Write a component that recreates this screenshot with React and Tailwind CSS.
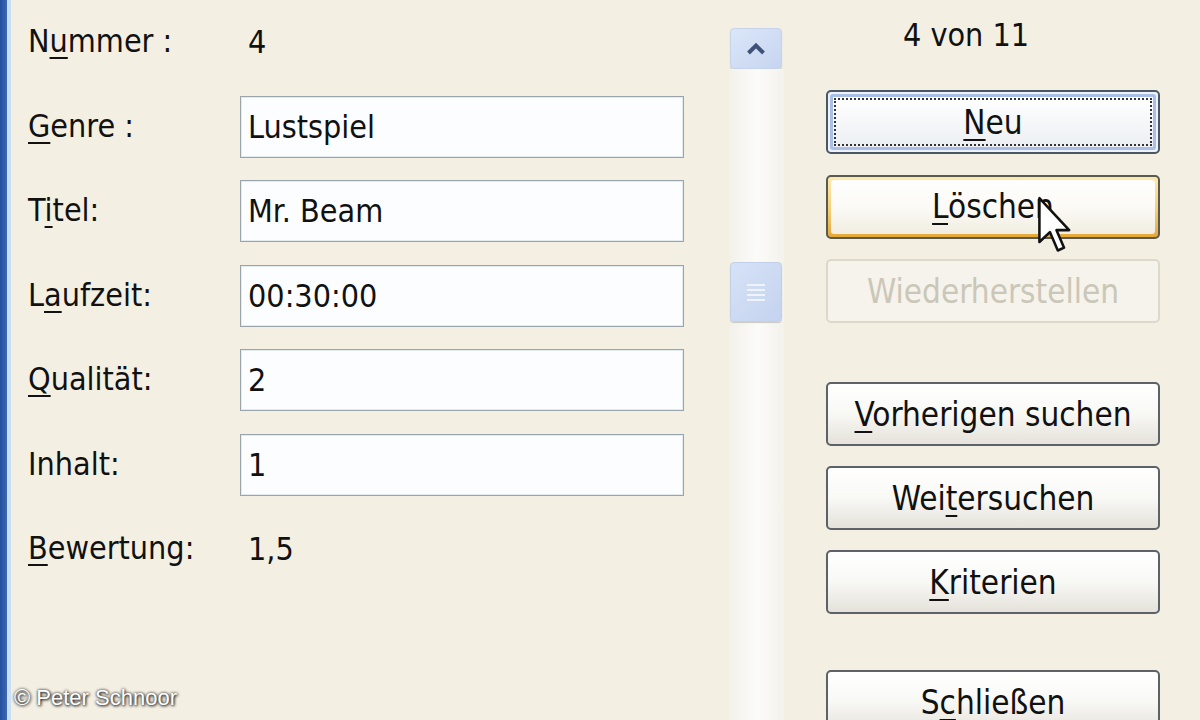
import React from "react";

const font = { fontFamily: '"DejaVu Sans Condensed", "DejaVu Sans", sans-serif' };

// label with an optional underlined access key
function Label({ before, keyChar, after }) {
  return (
    <span className="text-[32px] text-[#111] leading-none">
      {before}
      {keyChar && <u className="underline decoration-2 underline-offset-[5px]">{keyChar}</u>}
      {after}
    </span>
  );
}

function Key({ children }) {
  return <u className="underline decoration-2 underline-offset-[5px]">{children}</u>;
}

function FieldRow({ label, value, input }) {
  return (
    <div className="h-[84.5px] flex items-center">
      <div className="w-[212px] shrink-0">{label}</div>
      {input ? (
        <div className="w-[444px] h-[62px] border border-[#9aa4ad] bg-[#fbfdfe] flex items-center pl-[7px] shadow-[inset_0_0_0_1px_#e4ebf0]">
          <span className="text-[32px] text-[#111] leading-none">{value}</span>
        </div>
      ) : (
        <span className="text-[32px] text-[#111] leading-none pl-[8px]">{value}</span>
      )}
    </div>
  );
}

function XpButton({ children, variant = "normal" }) {
  if (variant === "default") {
    return (
      <div className="h-[64px] shrink-0 rounded-[5px] border-2 border-[#4a5866] bg-[#eef3fb] p-[2px]">
        <div className="h-full rounded-[3px] border-[3px] border-[#a9bfe8] bg-gradient-to-b from-[#ffffff] to-[#eceff3] p-[1px]">
          <div className="h-full border-2 border-dotted border-[#333] flex items-center justify-center text-[33px] text-[#111] leading-none">
            {children}
          </div>
        </div>
      </div>
    );
  }
  if (variant === "hover") {
    return (
      <div className="h-[64px] shrink-0 rounded-[5px] border-2 border-[#5b5a4e] bg-gradient-to-b from-[#fde9b0] via-[#f6d27e] to-[#e5a836] p-[3px]">
        <div className="h-full rounded-[3px] bg-gradient-to-b from-[#fefefd] via-[#fbfaf6] to-[#f1ede1] flex items-center justify-center text-[33px] text-[#111] leading-none">
          {children}
        </div>
      </div>
    );
  }
  if (variant === "disabled") {
    return (
      <div className="h-[64px] shrink-0 rounded-[5px] border-2 border-[#dcd8cb] bg-[#f5f3ec] flex items-center justify-center text-[33px] text-[#cbc7b8] leading-none">
        {children}
      </div>
    );
  }
  return (
    <div className="h-[64px] shrink-0 rounded-[5px] border-2 border-[#5d6168] bg-gradient-to-b from-[#ffffff] via-[#f8f8f5] to-[#e4e2da] flex items-center justify-center text-[33px] text-[#111] leading-none">
      {children}
    </div>
  );
}

function Arrow() {
  return (
    <svg width="34" height="60" viewBox="0 0 12 20" className="absolute left-[1038px] top-[195px]">
      <path
        d="M0.5 0.5 L0.5 16 L4.2 12.5 L7 19 L9.2 18 L6.5 11.8 L11 11.8 Z"
        fill="#fff"
        stroke="#111"
        strokeWidth="0.9"
        strokeLinejoin="round"
      />
    </svg>
  );
}

export default function App() {
  return (
    <div className="relative w-[1200px] h-[720px] overflow-hidden bg-[#f4efe3] flex" style={font}>
      <div className="w-[7px] bg-gradient-to-r from-[#234f9c] to-[#3d69b3] shrink-0" />
      <div className="w-[4px] bg-[#cadff3] shrink-0" />

      {/* record fields */}
      <div className="w-[714px] shrink-0 pl-[17px]">
        <FieldRow label={<Label before="N" keyChar="u" after="mmer :" />} value="4" />
        <FieldRow label={<Label keyChar="G" after="enre :" />} value="Lustspiel" input />
        <FieldRow label={<Label before="T" keyChar="i" after="tel:" />} value="Mr. Beam" input />
        <FieldRow label={<Label before="L" keyChar="a" after="ufzeit:" />} value="00:30:00" input />
        <FieldRow label={<Label keyChar="Q" after="ualität:" />} value="2" input />
        <FieldRow label={<Label before="Inhalt:" />} value="1" input />
        <FieldRow label={<Label keyChar="B" after="ewertung:" />} value="1,5" />
      </div>

      {/* scrollbar */}
      <div className="w-[60px] shrink-0 flex flex-col pt-[28px] pl-[5px]">
        <div className="w-[52px] h-[41px] shrink-0 rounded-[4px] border border-[#c6d3ea] bg-gradient-to-br from-[#dbe6f8] to-[#c6d5f0] flex items-center justify-center shadow-[0_1px_1px_#c9c9c0]">
          <svg width="20" height="13" viewBox="0 0 20 13">
            <path d="M2.5 11 L10 3.5 L17.5 11" fill="none" stroke="#3f5278" strokeWidth="4" />
          </svg>
        </div>
        <div className="w-[54px] flex-1 bg-gradient-to-r from-[#f3f1ea] via-[#fbfbf9] to-[#f4f2ec] pt-[193px] flex flex-col">
          <div className="w-[52px] h-[60px] shrink-0 rounded-[4px] border border-[#c1cfe8] bg-gradient-to-br from-[#d6e2f6] to-[#c4d3ef] flex flex-col items-center justify-center gap-[3px] shadow-[0_1px_1px_#c9c9c0]">
            <div className="w-[18px] h-[2px] bg-[#eef3fc]" />
            <div className="w-[18px] h-[2px] bg-[#eef3fc]" />
            <div className="w-[18px] h-[2px] bg-[#eef3fc]" />
            <div className="w-[18px] h-[2px] bg-[#eef3fc]" />
          </div>
        </div>
      </div>

      {/* command buttons */}
      <div className="w-[334px] shrink-0 ml-[41px] flex flex-col">
        <div className="h-[90px] shrink-0 pt-[19px] pl-[77px] text-[32px] text-[#111] leading-none">
          4 von 11
        </div>
        <div className="shrink-0 flex flex-col gap-[20.5px]">
          <XpButton variant="default">
            <span><Key>N</Key>eu</span>
          </XpButton>
          <XpButton variant="hover">
            <span><Key>L</Key>öschen</span>
          </XpButton>
          <XpButton variant="disabled">Wiederherstellen</XpButton>
        </div>
        <div className="shrink-0 mt-[59px] flex flex-col gap-[20px]">
          <XpButton>
            <span><Key>V</Key>orherigen suchen</span>
          </XpButton>
          <XpButton>
            <span>Wei<Key>t</Key>ersuchen</span>
          </XpButton>
          <XpButton>
            <span><Key>K</Key>riterien</span>
          </XpButton>
        </div>
        <div className="shrink-0 mt-[56px]">
          <XpButton>
            <span>S<Key>c</Key>hließen</span>
          </XpButton>
        </div>
      </div>

      <Arrow />

      <div
        className="absolute left-[14px] top-[687px] text-[22px] text-white leading-none [text-shadow:0_0_3px_#222,1px_1px_3px_#222]"
        style={{ fontFamily: '"Liberation Sans", Arial, sans-serif' }}
      >
        © Peter Schnoor
      </div>
    </div>
  );
}
